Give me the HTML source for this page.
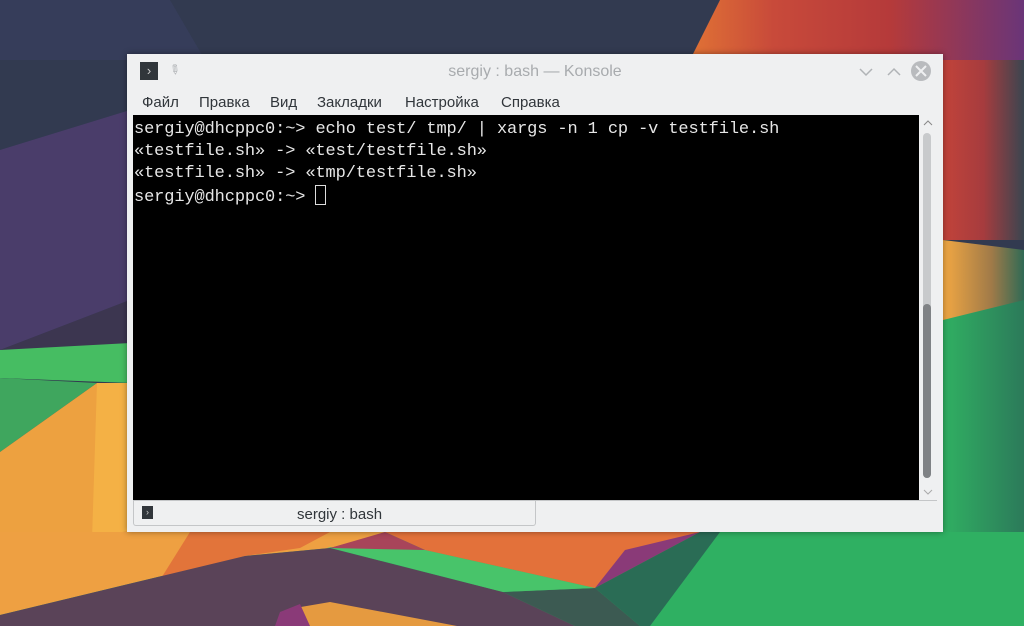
<!DOCTYPE html>
<html><head><meta charset="utf-8"><style>
html,body{margin:0;padding:0;width:1024px;height:626px;overflow:hidden;background:#323a50;font-family:"Liberation Sans","DejaVu Sans",sans-serif}
#bg{position:absolute;left:0;top:0}
.win{position:absolute;left:127px;top:54px;width:816px;height:478px;background:#eff0f1;box-shadow:0 0 6px rgba(0,0,0,.4)}
.ttext{position:absolute;left:0;width:816px;top:9px;text-align:center;color:#a8abae;font-size:16px}
.menu{position:absolute;left:0;top:40px;font-size:15px;color:#31363b;white-space:nowrap}
.menu span{position:absolute;top:0}
.term{position:absolute;left:6px;top:61px;width:786px;height:381px;background:#000;font-family:"Liberation Mono","DejaVu Sans Mono",monospace;font-size:17px;line-height:22px;color:#e6e6e6;padding-top:4px;white-space:pre;letter-spacing:-0.12px}
.term div{padding-left:1px}
.cur{display:inline-block;width:9px;height:18px;border:1px solid #ddd;vertical-align:-4px}
.sb{position:absolute;left:796px;top:79px;width:8px;height:345px;background:#c8cacc;border-radius:4px}
.sbt{position:absolute;left:796px;top:250px;width:8px;height:174px;background:#7f8285;border-radius:4px}
.tab{position:absolute;left:6px;top:447px;width:401px;height:24px;border:1px solid #c4c6c8;border-top:none;background:#eff0f1;border-radius:0 0 3px 3px}
.tab .t{position:absolute;left:163px;top:5px;font-size:15px;color:#31363b}
.ic{position:absolute;background:#31363b;color:#ccc;font-size:10px;line-height:14px;text-align:center}
</style></head><body>
<svg id="bg" width="1024" height="626" viewBox="0 0 1024 626">
<defs>
<linearGradient id="tr" x1="0" y1="0" x2="1" y2="0"><stop offset="0" stop-color="#e07235"/><stop offset=".25" stop-color="#c84a3a"/><stop offset=".6" stop-color="#b53a3a"/><stop offset="1" stop-color="#6a3578"/></linearGradient>
<linearGradient id="rr" x1="0" y1="0" x2="1" y2="0"><stop offset="0" stop-color="#c2433a"/><stop offset=".5" stop-color="#a63c3e"/><stop offset="1" stop-color="#3a4550"/></linearGradient>
<linearGradient id="ry" x1="0" y1="0" x2="1" y2="0"><stop offset="0" stop-color="#f2a843"/><stop offset=".6" stop-color="#a07a48"/><stop offset="1" stop-color="#2f6a55"/></linearGradient>
<linearGradient id="rg" x1="0" y1="0" x2="1" y2="0"><stop offset="0" stop-color="#30b062"/><stop offset="1" stop-color="#2c7a5a"/></linearGradient>
</defs>
<rect width="1024" height="626" fill="#323a50"/>
<polygon points="0,0 170,0 205,60 0,60" fill="#363d5a"/>
<polygon points="0,150 130,110 130,300 0,350" fill="#4a3d6a"/>
<polygon points="0,350 130,300 130,343 20,355" fill="#3c3650"/>
<polygon points="720,0 1024,0 1024,60 690,60" fill="url(#tr)"/>
<polygon points="943,60 1024,60 1024,240 943,240" fill="url(#rr)"/>
<polygon points="943,240 1024,250 1024,340 943,340" fill="url(#ry)"/>
<polygon points="943,320 1024,300 1024,626 943,626" fill="url(#rg)"/>
<polygon points="0,350 130,343 130,383 0,378" fill="#46bd62"/>
<polygon points="0,378 97,383 0,452" fill="#3fa65e"/>
<polygon points="0,452 97,383 130,383 130,626 0,626" fill="#eda140"/>
<polygon points="97,383 130,383 130,530 92,540" fill="#f4b145"/>
<rect x="0" y="532" width="1024" height="94" fill="#2fb062"/>
<polygon points="0,532 390,532 330,548 245,556 0,615" fill="#eea042"/>
<polygon points="190,532 330,532 300,548 245,556 160,580" fill="#e2743a"/>
<polygon points="0,615 245,556 330,548 503,592 575,626 0,626" fill="#5a4358"/>
<polygon points="503,592 595,588 640,626 575,626" fill="#3c5a52"/>
<polygon points="327,547 425,550 595,588 503,592" fill="#48c46a"/>
<polygon points="385,532 700,532 595,588 425,550" fill="#e3713a"/>
<polygon points="330,548 385,532 425,550" fill="#a8445a"/>
<polygon points="595,588 625,550 700,532" fill="#8a3a78"/>
<polygon points="595,588 700,532 720,532 650,626 640,626" fill="#2a6c55"/>
<polygon points="295,608 330,602 457,626 290,626" fill="#e59a40"/>
<polygon points="280,612 300,604 310,626 275,626" fill="#8a3a78"/>
</svg>
<div class="win">
 <div class="ic" style="left:13px;top:8px;width:18px;height:18px;font-size:13px;line-height:17px">›</div>
 <div style="position:absolute;left:42px;top:8px;color:#b0b3b6;font-size:13px;transform:rotate(40deg)">✎</div>
 <div class="ttext">sergiy : bash — Konsole</div>
 <svg style="position:absolute;left:730px;top:7px" width="86" height="22">
  <polyline points="3,8 9,14 15,8" fill="none" stroke="#b0b3b6" stroke-width="1.5"/>
  <polyline points="31,14 37,8 43,14" fill="none" stroke="#b0b3b6" stroke-width="1.5"/>
  <circle cx="64" cy="10" r="10" fill="#b9bbbe"/>
  <path d="M59,5 L69,15 M69,5 L59,15" stroke="#eff0f1" stroke-width="2"/>
 </svg>
 <div class="menu"><span style="left:15px">Файл</span><span style="left:72px">Правка</span><span style="left:143px">Вид</span><span style="left:190px">Закладки</span><span style="left:278px">Настройка</span><span style="left:374px">Справка</span></div>
 <div class="term"><div>sergiy@dhcppc0:~&gt; echo test/ tmp/ | xargs -n 1 cp -v testfile.sh</div><div>«testfile.sh» -&gt; «test/testfile.sh»</div><div>«testfile.sh» -&gt; «tmp/testfile.sh»</div><div>sergiy@dhcppc0:~&gt; <span class="cur"></span></div></div>
 <svg style="position:absolute;left:795px;top:64px" width="12" height="380"><polyline points="2,7 6,3 10,7" fill="none" stroke="#888" stroke-width="1"/><polyline points="2,372 6,376 10,372" fill="none" stroke="#aaa" stroke-width="1"/></svg>
 <div class="sb"></div><div class="sbt"></div>
 <div style="position:absolute;left:6px;top:446px;width:804px;height:1px;background:#c4c6c8"></div>
 <div class="tab"><div class="ic" style="left:8px;top:5px;width:11px;height:13px;font-size:9px;line-height:13px">›</div><div class="t">sergiy : bash</div></div>
</div>
</body></html>
